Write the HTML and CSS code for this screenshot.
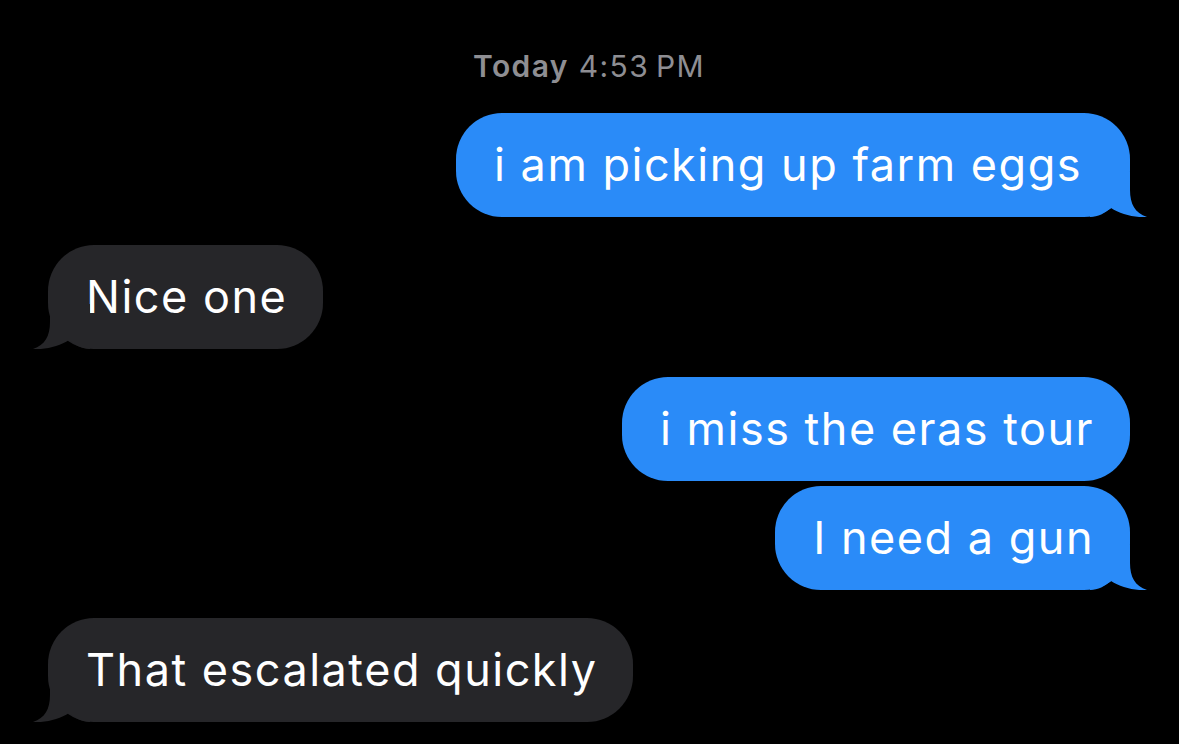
FILE: index.html
```html
<!DOCTYPE html>
<html lang="en">
<head>
    <meta charset="UTF-8">
    <meta name="viewport" content="width=device-width, initial-scale=1.0">
    <title>Messages</title>
    <link rel="stylesheet" href="styles.css">
</head>
<body>
    <main class="chat">
        <!-- Waktu -->
        <p class="stamp"><b>Today</b> 4:53&#8201;PM</p>

        <div class="bubble sent tail wide">
            i am picking up farm eggs
            <svg class="tail-shape" viewBox="0 0 57 45"><path d="M0 0 H40 V18 C40 32 45 41 57 45 C45 46 30 42 21 36 C15 41 8 45 0 45 Z"/></svg>
        </div>

        <div class="bubble received tail">
            Nice one
            <svg class="tail-shape" viewBox="0 0 57 45"><path d="M0 0 H40 V18 C40 32 45 41 57 45 C45 46 30 42 21 36 C15 41 8 45 0 45 Z"/></svg>
        </div>

        <div class="bubble sent group">i miss the eras tour</div>

        <div class="bubble sent tail">
            I need a gun
            <svg class="tail-shape" viewBox="0 0 57 45"><path d="M0 0 H40 V18 C40 32 45 41 57 45 C45 46 30 42 21 36 C15 41 8 45 0 45 Z"/></svg>
        </div>

        <div class="bubble received tail">
            That escalated quickly
            <svg class="tail-shape" viewBox="0 0 57 45"><path d="M0 0 H40 V18 C40 32 45 41 57 45 C45 46 30 42 21 36 C15 41 8 45 0 45 Z"/></svg>
        </div>
    </main>
</body>
</html>
```

FILE: styles.css
```css
/* Umum */
body {
    margin: 0;
    background-color: #000;
    font-family: Inter, "Noto Sans", sans-serif;
}

.chat {
    display: flex;
    flex-direction: column;
    padding: 48px 49px 0 48px;
    height: 744px;
    box-sizing: border-box;
    overflow: hidden;
}

/* Waktu */
.stamp {
    margin: 0 0 29px;
    text-align: center;
    color: #8e8e93;
    font-size: 30px;
    letter-spacing: 1.4px;
    line-height: 36px;
}
.stamp b {
    font-weight: 600;
}

/* Gelembung */
.bubble {
    position: relative;
    height: 104px;
    line-height: 104px;
    padding: 0 36px 0 38px;
    border-radius: 46px;
    font-size: 45px;
    letter-spacing: 1.5px;
    color: #fff;
    white-space: nowrap;
    margin-bottom: 28px;
}
.wide {
    padding-right: 48px;
}
.sent {
    align-self: flex-end;
    background-color: #2a8bf8;
    fill: #2a8bf8;
}
.received {
    align-self: flex-start;
    background-color: #262629;
    fill: #262629;
}
.group {
    margin-bottom: 5px;
}

.tail-shape {
    position: absolute;
    bottom: 0;
    width: 57px;
    height: 45px;
}
.sent .tail-shape {
    right: -17px;
}
.received .tail-shape {
    left: -15px;
    transform: scaleX(-1);
}
```
